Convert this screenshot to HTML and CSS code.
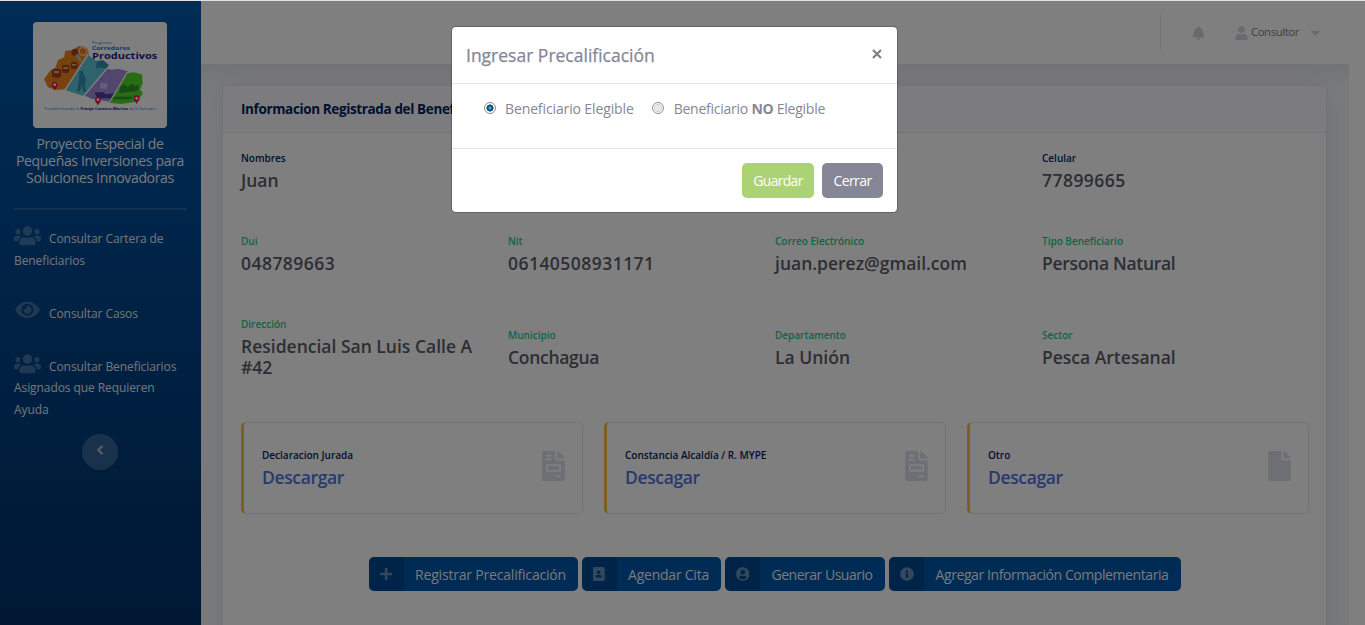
FILE: index.html
```html
<!DOCTYPE html>
<html lang="es">
<head>
<meta charset="utf-8">
<title>Ingresar Precalificación</title>
<link rel="stylesheet" href="styles.css">
</head>
<body>
<svg class="sprite" aria-hidden="true">
  <symbol id="users" viewBox="0 0 640 512"><path d="M96 224c35.3 0 64-28.7 64-64s-28.7-64-64-64-64 28.7-64 64 28.7 64 64 64zm448 0c35.3 0 64-28.7 64-64s-28.7-64-64-64-64 28.7-64 64 28.7 64 64 64zm32 32h-64c-17.6 0-33.5 7.1-45.1 18.6 40.3 22.1 68.9 62 75.1 109.4h66c17.7 0 32-14.3 32-32v-32c0-35.3-28.7-64-64-64zm-256 0c61.9 0 112-50.1 112-112S381.9 32 320 32 208 82.1 208 144s50.1 112 112 112zm76.8 32h-8.3c-20.8 10-43.9 16-68.5 16s-47.6-6-68.5-16h-8.3C179.6 288 128 339.6 128 403.2V432c0 26.5 21.5 48 48 48h288c26.5 0 48-21.5 48-48v-28.8c0-63.6-51.6-115.2-115.2-115.2zm-223.7-13.4C161.5 263.1 145.6 256 128 256H64c-35.3 0-64 28.7-64 64v32c0 17.7 14.3 32 32 32h65.9c6.3-47.4 34.9-87.3 75.2-109.4z"/></symbol>
  <symbol id="eye" viewBox="0 0 576 512"><path d="M572.52 241.4C518.29 135.59 410.93 64 288 64S57.68 135.64 3.48 241.41a32.35 32.35 0 0 0 0 29.19C57.71 376.41 165.07 448 288 448s230.32-71.64 284.52-177.41a32.35 32.35 0 0 0 0-29.19zM288 400a144 144 0 1 1 144-144 143.93 143.93 0 0 1-144 144zm0-240a95.31 95.31 0 0 0-25.31 3.79 47.85 47.85 0 0 1-66.9 66.9A95.78 95.78 0 1 0 288 160z"/></symbol>
  <symbol id="invoice" viewBox="0 0 384 512"><path d="M288 256H96v64h192v-64zm89-151L279.1 7c-4.5-4.5-10.6-7-17-7H256v128h128v-6.1c0-6.3-2.5-12.4-7-16.9zm-153 31V0H24C10.7 0 0 10.7 0 24v464c0 13.2 10.7 24 24 24h336c13.3 0 24-10.7 24-24V160H248c-13.2 0-24-10.8-24-24zM64 72c0-4.42 3.58-8 8-8h80c4.42 0 8 3.58 8 8v16c0 4.42-3.58 8-8 8H72c-4.42 0-8-3.58-8-8V72zm0 64c0-4.42 3.58-8 8-8h80c4.42 0 8 3.58 8 8v16c0 4.42-3.58 8-8 8H72c-4.42 0-8-3.58-8-8v-16zm256 304c0 4.42-3.58 8-8 8h-80c-4.42 0-8-3.58-8-8v-16c0-4.42 3.58-8 8-8h80c4.42 0 8 3.58 8 8v16zm0-200v96c0 8.84-7.16 16-16 16H80c-8.84 0-16-7.16-16-16v-96c0-8.84 7.16-16 16-16h224c8.84 0 16 7.16 16 16z"/></symbol>
</svg>
<div class="page">
  <aside class="sidebar">
    <svg class="logo" viewBox="99 66 402 318">
      <path fill="#f08420" d="M132 238l18-26 16-8 8-24 18-8 4-20 24-2 16-12 16 2 12 8 2 14-28 40-42 66-28 2-24-8z"/>
      <path fill="#5fc4d6" d="M196 270l44-68 24-38 24 18 20-2 18 16-6 14-68 78-27-8z"/>
      <path fill="#2f93ad" d="M290 185l18-5 18 14-8 12-18-4-12 4zM238 214l9-3 4 12 7 14-4 18 4 22-9-4-4-18-6 20-8-3 6-32z"/>
      <path fill="#a48bdc" d="M252 286l66-80 22 3 14-3 30 8-54 92-30-6-26-4z"/>
      <path fill="#55d62a" d="M382 220l18-3 26 6 2 28-8 18 9 10-18 26-48 7-37-4z"/>
      <path fill="#2c9b28" d="M360 262l13-9 10 8 12-10 13 7 8-7v16l-8 6-50 7zM336 290h64l-8 8h-62z"/>
      <path fill="#4b3fa0" d="M284 277h28l4 6 26-3-9 15h-42z"/>
      <path fill="#c9baf0" d="M300 249h22v17h-22z"/>
      <g stroke="#fff" stroke-width="4"><path d="M264 163l-70 109M322 204l-72 86M382 216l-56 96"/></g>
      <g fill="#a4441c"><rect x="156" y="206" width="27" height="27" rx="7"/><rect x="186" y="194" width="22" height="25" rx="7"/><rect x="212" y="185" width="20" height="22" rx="7"/><circle cx="225" cy="157" r="11"/></g>
      <g fill="#f0a86a"><rect x="162" y="213" width="15" height="7"/><rect x="190" y="201" width="14" height="6"/><rect x="216" y="192" width="12" height="5"/></g>
      <circle cx="249" cy="154" r="12" fill="none" stroke="#ffc18a" stroke-width="5"/>
      <path d="M229 164l14 19" stroke="#8adcea" stroke-width="6"/>
      <g fill="#f0144e"><path d="M164 271c-5-9-9-11-9-17a9 9 0 0 1 18 0c0 6-4 8-9 17zM294 316c-5-9-9-11-9-17a9 9 0 0 1 18 0c0 6-4 8-9 17zM410 312c-5-9-9-11-9-17a9 9 0 0 1 18 0c0 6-4 8-9 17z"/></g>
      <g fill="#fff"><circle cx="164" cy="254" r="4"/><circle cx="294" cy="299" r="4"/><circle cx="410" cy="295" r="4"/></g>
      <text class="logo-mid" x="276" y="131" font-size="11" textLength="59" lengthAdjust="spacingAndGlyphs">Programa</text>
      <text class="logo-mid logo-bold" x="276" y="151" font-size="18" textLength="114" lengthAdjust="spacingAndGlyphs">Corredores</text>
      <text class="logo-dark logo-bold" x="276" y="176" font-size="27" textLength="196" lengthAdjust="spacingAndGlyphs">Productivos</text>
      <text class="logo-mid" x="132" y="330" font-size="12.5" textLength="338" lengthAdjust="spacingAndGlyphs">Transformando la <tspan class="logo-dark logo-bold">Franja Costero-Marina</tspan> de El Salvador</text>
    </svg>
    <div class="brand">Proyecto Especial de<br>Pequeñas Inversiones para<br>Soluciones Innovadoras</div>
    <hr class="divider">
    <nav class="menu">
      <a><svg class="nav-icon"><use href="#users"/></svg>Consultar Cartera de Beneficiarios</a>
      <a><svg class="nav-icon nav-icon-eye"><use href="#eye"/></svg>Consultar Casos</a>
      <a><svg class="nav-icon"><use href="#users"/></svg>Consultar Beneficiarios Asignados que Requieren Ayuda</a>
    </nav>
    <div class="toggle"><svg width="8" height="12" viewBox="0 0 8 12"><path d="M6.5 1.8L2.3 6l4.2 4.2" fill="none" stroke="currentColor" stroke-width="2.4"/></svg></div>
  </aside>
  <div class="main">
    <header class="topbar">
      <svg class="bell" viewBox="0 0 448 512"><path d="M224 512c35.32 0 63.97-28.65 63.97-64H160.03c0 35.35 28.65 64 63.97 64zm215.39-149.71c-19.32-20.76-55.47-51.99-55.47-154.29 0-77.7-54.48-139.9-127.94-155.16V32c0-17.67-14.32-32-31.98-32s-31.98 14.33-31.98 32v20.84C118.56 68.1 64.08 130.3 64.08 208c0 102.3-36.15 133.53-55.47 154.29-6 6.45-8.66 14.16-8.61 21.71.11 16.4 12.98 32 32.1 32h383.8c19.12 0 32-15.6 32.1-32 .05-7.55-2.61-15.27-8.61-21.71z"/></svg>
      <svg class="user-icon" viewBox="0 0 448 512"><path d="M224 256c70.7 0 128-57.3 128-128S294.7 0 224 0 96 57.3 96 128s57.3 128 128 128zm89.6 32h-16.7c-22.2 10.2-46.9 16-72.9 16s-50.6-5.8-72.9-16h-16.7C60.2 288 0 348.2 0 422.4V464c0 26.5 21.5 48 48 48h352c26.5 0 48-21.5 48-48v-41.6c0-74.2-60.2-134.4-134.4-134.4z"/></svg>
      <span class="user-name">Consultor</span>
      <svg class="caret" viewBox="0 0 9 5"><path d="M0 0h9L4.5 5z"/></svg>
    </header>
    <div class="content">
      <section class="card">
        <h6 class="card-header">Informacion Registrada del Beneficiario</h6>
        <div class="card-body">
          <div class="fields">
            <div><div class="label navy">Nombres</div><div class="value">Juan</div></div>
            <div></div>
            <div></div>
            <div><div class="label navy">Celular</div><div class="value digits">77899665</div></div>
            <div><div class="label">Dui</div><div class="value digits">048789663</div></div>
            <div><div class="label">Nit</div><div class="value digits">06140508931171</div></div>
            <div><div class="label">Correo Electrónico</div><div class="value">juan.perez@gmail.com</div></div>
            <div><div class="label">Tipo Beneficiario</div><div class="value tight">Persona Natural</div></div>
            <div><div class="label">Dirección</div><div class="value">Residencial San Luis Calle A #42</div></div>
            <div><div class="label">Municipio</div><div class="value tight">Conchagua</div></div>
            <div><div class="label">Departamento</div><div class="value">La Unión</div></div>
            <div><div class="label">Sector</div><div class="value">Pesca Artesanal</div></div>
          </div>
          <div class="files">
            <div class="file"><div><div class="label navy">Declaracion Jurada</div><div class="value link">Descargar</div></div><svg><use href="#invoice"/></svg></div>
            <div class="file"><div><div class="label navy">Constancia Alcaldía / R. MYPE</div><div class="value link">Descagar</div></div><svg><use href="#invoice"/></svg></div>
            <div class="file"><div><div class="label navy">Otro</div><div class="value link">Descagar</div></div><svg viewBox="0 0 384 512"><path d="M224 136V0H24C10.7 0 0 10.7 0 24v464c0 13.3 10.7 24 24 24h336c13.3 0 24-10.7 24-24V160H248c-13.2 0-24-10.8-24-24zm160-14.1v6.1H256V0h6.1c6.4 0 12.5 2.5 17 7l97.9 98c4.5 4.5 7 10.6 7 16.9z"/></svg></div>
          </div>
          <div class="actions">
            <a class="action action-register"><span class="action-icon"><svg viewBox="0 0 448 512"><path d="M416 208H272V64c0-17.67-14.33-32-32-32h-32c-17.67 0-32 14.33-32 32v144H32c-17.67 0-32 14.33-32 32v32c0 17.67 14.33 32 32 32h144v144c0 17.67 14.33 32 32 32h32c17.67 0 32-14.33 32-32V304h144c17.67 0 32-14.33 32-32v-32c0-17.67-14.33-32-32-32z"/></svg></span><span class="action-text">Registrar Precalificación</span></a>
            <a class="action action-date"><span class="action-icon"><svg viewBox="0 0 448 512"><path d="M436 160c6.6 0 12-5.4 12-12v-40c0-6.6-5.4-12-12-12h-20V48c0-26.5-21.5-48-48-48H48C21.5 0 0 21.5 0 48v416c0 26.5 21.5 48 48 48h320c26.5 0 48-21.5 48-48v-48h20c6.6 0 12-5.4 12-12v-40c0-6.6-5.4-12-12-12h-20v-64h20c6.6 0 12-5.4 12-12v-40c0-6.6-5.4-12-12-12h-20v-64h20zm-228-32c35.3 0 64 28.7 64 64s-28.7 64-64 64-64-28.7-64-64 28.7-64 64-64zm112 236.8c0 10.6-10 19.2-22.4 19.2H118.4C106 384 96 375.4 96 364.8v-19.2c0-31.8 30.1-57.6 67.2-57.6h5c12.3 5.1 25.7 8 39.8 8s27.6-2.9 39.8-8h5c37.1 0 67.2 25.8 67.2 57.6v19.2z"/></svg></span><span class="action-text">Agendar Cita</span></a>
            <a class="action action-user"><span class="action-icon"><svg viewBox="0 0 496 512"><path d="M248 8C111 8 0 119 0 256s111 248 248 248 248-111 248-248S385 8 248 8zm0 96c48.6 0 88 39.4 88 88s-39.4 88-88 88-88-39.4-88-88 39.4-88 88-88zm0 344c-58.7 0-111.3-26.6-146.5-68.2 18.8-35.4 55.6-59.8 98.5-59.8 2.4 0 4.8.4 7.1 1.1 13 4.2 26.6 6.9 40.9 6.9 14.3 0 28-2.7 40.9-6.9 2.3-.7 4.7-1.1 7.1-1.1 42.9 0 79.7 24.4 98.5 59.8C359.3 421.4 306.7 448 248 448z"/></svg></span><span class="action-text">Generar Usuario</span></a>
            <a class="action action-info"><span class="action-icon"><svg viewBox="0 0 512 512"><path d="M256 8C119.043 8 8 119.083 8 256c0 136.997 111.043 248 248 248s248-111.003 248-248C504 119.083 392.957 8 256 8zm0 110c23.196 0 42 18.804 42 42s-18.804 42-42 42-42-18.804-42-42 18.804-42 42-42zm56 254c0 6.627-5.373 12-12 12h-88c-6.627 0-12-5.373-12-12v-24c0-6.627 5.373-12 12-12h12v-64h-12c-6.627 0-12-5.373-12-12v-24c0-6.627 5.373-12 12-12h64c6.627 0 12 5.373 12 12v100h12c6.627 0 12 5.373 12 12v24z"/></svg></span><span class="action-text">Agregar Información Complementaria</span></a>
          </div>
        </div>
      </section>
    </div>
  </div>
</div>
<div class="backdrop">
  <div class="modal" role="dialog">
    <div class="modal-header"><span class="modal-title">Ingresar Precalificación</span><svg class="close" viewBox="0 0 10 10"><path d="M1 1l8 8M9 1L1 9"/></svg></div>
    <div class="modal-body">
      <label class="option"><i class="radio checked"></i><span>Beneficiario Elegible</span></label>
      <label class="option option-no"><i class="radio"></i><span>Beneficiario <b>NO</b> Elegible</span></label>
    </div>
    <div class="modal-footer"><span class="btn save">Guardar</span><span class="btn cancel">Cerrar</span></div>
  </div>
</div>
</body>
</html>
```
FILE: styles.css
```css
* { box-sizing: border-box; }
body {
  margin: 0;
  height: 625px;
  overflow: hidden;
  padding-top: 1px;
  background: #dfe3e3;
  color: #858796;
  font: 14px/21px "Open Sans", "Noto Sans", sans-serif;
}
.sprite { position: absolute; width: 0; height: 0; }
.page { display: flex; height: 624px; background: #fff; overflow: hidden; }

/* Sidebar */
.sidebar {
  flex: none;
  width: 201px;
  padding: 21px 15px 0 14px;
  display: flex;
  flex-direction: column;
  background: linear-gradient(#0058ab, #003068);
  color: #fff;
}
.logo { width: 134px; height: 106px; margin: 0 auto 0 19px; border-radius: 4px; background: #fff; flex: none; }
.logo text { font-family: "Open Sans", sans-serif; }
.logo-mid { fill: #3570c4; }
.logo-dark { fill: #1b2090; }
.logo-bold { font-weight: 700; }
.brand { margin: 7px -10px 0; text-align: center; line-height: 17px; letter-spacing: -0.33px; color: #f2f5fa; }
.divider { width: 173px; height: 2px; margin: 22px 0 18px; border: 0; background: rgba(255,255,255,.15); flex: none; }
.menu { display: flex; flex-direction: column; gap: 31.5px; font-size: 12px; line-height: 21.6px; letter-spacing: -0.08px; color: #e6ebf2; }
.menu a { display: block; }
.nav-icon { width: 27px; height: 21.6px; margin: -6px 8px -2px 0; vertical-align: -2px; fill: rgba(255,255,255,.25); }
.nav-icon-eye { vertical-align: -1px; }
.toggle { width: 36px; height: 36px; margin: 13px auto 0; border-radius: 50%; display: grid; place-items: center; background: rgba(255,255,255,.2); color: #aab6c8; }
.toggle svg { margin-top: -3px; }

/* Top bar */
.main { flex: 1; min-width: 0; display: flex; flex-direction: column; }
.topbar {
  flex: none;
  height: 63px;
  display: flex;
  align-items: center;
  padding: 0 45px 0 959px;
  background: #fff;
}
.topbar::before { content: ""; width: 1px; height: 34px; margin: -1px 31px 0 0; background: #e3e6f0; flex: none; }
.topbar svg { fill: #d1d3e2; flex: none; }
.bell { width: 13px; height: 14px; margin-right: 30px; }
.topbar .user-icon { width: 13px; height: 14px; margin: 0 3px 0 0; }
.user-name { font-size: 11.2px; letter-spacing: -0.33px; color: #7b7d8a; margin-top: -2px; }
.topbar .caret { width: 9px; height: 5px; margin: 1px 0 0 12px; }
.content {
  flex: 1;
  width: 1148px;
  padding: 21px 22px 0 21px;
  background: #f8f9fc;
  box-shadow: inset 0 16px 26px -10px rgba(58,59,69,.13);
  overflow: hidden;
}

/* Card */
.card { height: 700px; border: 1px solid #e3e6f0; border-radius: 5px; background: #fff; box-shadow: 0 2px 25px rgba(58,59,69,.15); }
.card-header { margin: 0; height: 47px; padding: 0 18px; border-bottom: 1px solid #e3e6f0; border-radius: 5px 5px 0 0; background: #f8f9fc; font-size: 13.5px; line-height: 46px; font-weight: 700; letter-spacing: -0.37px; color: #001e5c; }
.card-body { padding: 17px 18px 0; }
.fields { display: grid; grid-template-columns: repeat(4, 267px); row-gap: 41px; align-items: center; }
.fields > div { padding-right: 22px; }
.label { height: 17px; margin-bottom: 3px; padding-bottom: 0; font-size: 10px; line-height: 17px; font-weight: 600; color: #1cc88a; white-space: nowrap; }
.navy { color: #001e5c; }
.value { padding-bottom: 1px; font-size: 17.5px; line-height: 21px; font-weight: 600; color: #5a5c69; }
.tight { letter-spacing: -0.3px; }
.digits { letter-spacing: 0.46px; }
.files { display: grid; grid-template-columns: repeat(3, 342px); gap: 21px; margin-top: 43px; }
.file { height: 92px; padding: 0 17px 0 18px; display: flex; align-items: center; justify-content: space-between; border: 1px solid #e3e6f0; border-left: 3px solid #f6c23e; border-radius: 5px; }
.file svg { width: 23px; height: 30px; margin-top: -4px; fill: #dddfeb; }
.link { color: #4e73df; letter-spacing: -0.36px; }
.actions { display: flex; justify-content: center; gap: 4px; margin-top: 43px; }
.action { height: 34px; display: flex; border-radius: 5px; overflow: hidden; background: #0056a8; color: #eef2f7; }
.action-icon { width: 35px; padding-left: 1px; display: grid; place-items: center; background: rgba(0,0,0,.15); }
.action-icon svg { height: 14px; fill: rgba(255,255,255,.4); }
.action-text { flex: 1; text-align: center; line-height: 35px; white-space: nowrap; }
.action-register { width: 209px; letter-spacing: -0.19px; }
.action-date { width: 139px; letter-spacing: -0.23px; }
.action-user { width: 160px; letter-spacing: -0.49px; }
.action-info { width: 292px; letter-spacing: -0.42px; }

/* Modal */
.backdrop { position: absolute; inset: 1px 0 0; display: flex; justify-content: center; align-items: flex-start; padding: 25px 16px 0 0; background: rgba(0,0,0,.5); }
.modal { width: 447px; height: 187px; border: 1px solid rgba(0,0,0,.2); border-radius: 5px; background: #fff; background-clip: padding-box; }
.modal-header { height: 57px; display: flex; justify-content: space-between; align-items: center; padding: 0 15px 0 14px; border-bottom: 1px solid #e3e6f0; }
.modal-title { font-size: 17.5px; -webkit-text-stroke: 0.25px; }
.close { width: 10px; height: 10px; margin-top: -2px; fill: none; stroke: #808080; stroke-width: 2.2; }
.modal-body { height: 65px; padding: 14px 0 0 32px; display: flex; align-items: flex-start; gap: 18px; border-bottom: 1px solid #e3e6f0; letter-spacing: -0.12px; }
.option { display: flex; gap: 9px; }
.option-no { gap: 10px; letter-spacing: -0.25px; }
.radio { width: 12px; height: 12px; margin-top: 4px; border: 1px solid #8b8e90; border-radius: 50%; background: radial-gradient(#e8e8e8 45%, #cfcfcf 50%, #fff 62%); }
.checked { background: radial-gradient(circle at 50% 50%, #6fd0f5 0, #1b80b8 18%, #0c3755 46%, #fff 54%); }
.modal-footer { display: flex; justify-content: flex-end; gap: 8px; padding: 14px 14px 0; }
.btn { height: 35px; border-radius: 5px; text-align: center; line-height: 36px; color: #fff; }
.save { width: 72px; background: #abd373; letter-spacing: -0.7px; }
.cancel { width: 61px; background: #858796; letter-spacing: -0.6px; }
```
